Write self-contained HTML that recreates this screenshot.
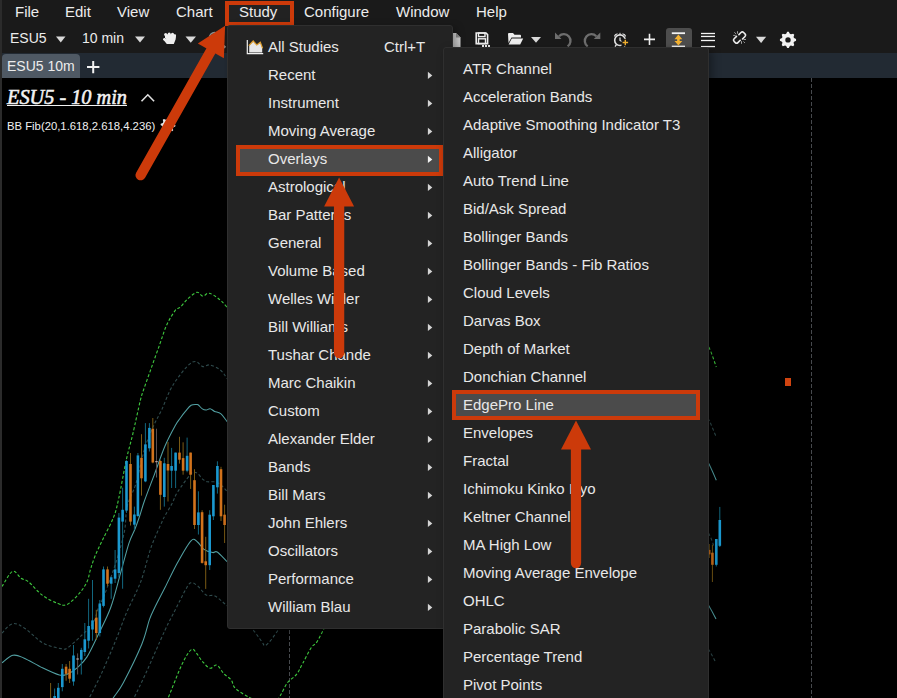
<!DOCTYPE html>
<html><head><meta charset="utf-8">
<style>
*{margin:0;padding:0;box-sizing:border-box}
html,body{width:897px;height:698px;overflow:hidden;background:#000;font-family:"Liberation Sans",sans-serif;color:#e6e6e6}
.abs{position:absolute}
.mb{position:absolute;top:3px;font-size:15px;line-height:18px;color:#ececec;white-space:nowrap}
.tb{position:absolute;font-size:14px;line-height:16px;color:#ececec;white-space:nowrap}
.menu{position:absolute;background:#232323;border:1px solid #2f2f2f;border-radius:3px;box-shadow:3px 3px 9px rgba(0,0,0,0.35)}
.mi{position:absolute;font-size:15px;line-height:18px;color:#e8e8e8;white-space:nowrap}
.tri{position:absolute;width:0;height:0;border-top:3.7px solid transparent;border-bottom:3.7px solid transparent;border-left:4.6px solid #d0d0d0}
</style></head><body>

<div class="abs" style="left:0;top:0;width:897px;height:53px;background:#1a1a1a"></div>
<div class="abs" style="left:0;top:53px;width:897px;height:25px;background:#222a33"></div>
<div class="abs" style="left:2px;top:54px;width:78px;height:24px;background:#4f5964;border-radius:4px 4px 0 0"></div>
<svg class="abs" style="left:0;top:0" width="897" height="698"><line x1="289.5" y1="78" x2="289.5" y2="698" stroke="#46494d" stroke-width="1" stroke-dasharray="4 2"/>
<line x1="811.5" y1="78" x2="811.5" y2="698" stroke="#46494d" stroke-width="1" stroke-dasharray="4 2"/>
<rect x="785" y="378" width="6" height="8" fill="#d04410"/>
<path d="M2.00,633.00 C3.77,631.45 8.77,624.45 12.60,623.70 C16.43,622.95 19.93,625.28 25.00,628.50 C30.07,631.72 37.00,639.65 43.00,643.00 C49.00,646.35 56.83,647.85 61.00,648.60 C65.17,649.35 64.50,649.77 68.00,647.50 C71.50,645.23 77.85,639.03 82.00,635.00 C86.15,630.97 90.12,627.97 92.90,623.30 C95.68,618.63 96.72,611.88 98.70,607.00 C100.68,602.12 101.80,601.83 104.80,594.00 C107.80,586.17 113.42,570.50 116.70,560.00 C119.98,549.50 122.75,540.00 124.50,531.00 C126.25,522.00 125.32,513.83 127.20,506.00 C129.08,498.17 132.93,493.42 135.80,484.00 C138.67,474.58 141.53,459.00 144.40,449.50 C147.27,440.00 150.13,433.58 153.00,427.00 C155.87,420.42 158.73,416.17 161.60,410.00 C164.47,403.83 167.33,395.57 170.20,390.00 C173.07,384.43 175.67,380.83 178.80,376.60 C181.93,372.37 186.13,367.12 189.00,364.60 C191.87,362.08 193.70,361.17 196.00,361.50 C198.30,361.83 200.52,366.03 202.80,366.60 C205.08,367.17 206.83,364.38 209.70,364.90 C212.57,365.42 217.13,367.47 220.00,369.70 C222.87,371.93 224.40,374.58 226.90,378.30 C229.40,382.02 233.65,389.72 235.00,392.00" stroke="#2f4b4d" stroke-width="1.1" fill="none" stroke-dasharray="3 2.2"/>
<path d="M700.00,405.00 C701.48,407.50 706.18,414.63 708.90,420.00 C711.62,425.37 715.07,434.33 716.30,437.20" stroke="#2f4b4d" stroke-width="1.1" fill="none" stroke-dasharray="3 2.2"/>
<path d="M85.00,706.00 C87.50,701.12 94.92,687.53 100.00,676.70 C105.08,665.87 111.12,651.58 115.50,641.00 C119.88,630.42 122.68,621.70 126.30,613.20 C129.92,604.70 134.47,596.20 137.20,590.00 C139.93,583.80 140.35,583.22 142.70,576.00 C145.05,568.78 148.15,555.58 151.30,546.70 C154.45,537.82 159.32,527.87 161.60,522.70 C163.88,517.53 163.28,518.85 165.00,515.70 C166.72,512.55 169.80,507.75 171.90,503.80 C174.00,499.85 174.55,496.85 177.60,492.00 C180.65,487.15 187.43,477.98 190.20,474.70 C192.97,471.42 192.88,472.43 194.20,472.30 C195.52,472.17 196.65,472.72 198.10,473.90 C199.55,475.08 201.32,478.08 202.90,479.40 C204.48,480.72 205.77,481.40 207.60,481.80 C209.43,482.20 211.80,481.40 213.90,481.80 C216.00,482.20 218.03,482.62 220.20,484.20 C222.37,485.78 224.43,488.67 226.90,491.30 C229.37,493.93 233.65,498.55 235.00,500.00" stroke="#2f4b4d" stroke-width="1.1" fill="none" stroke-dasharray="3 2.2"/>
<path d="M700.00,520.00 C701.53,522.40 706.90,530.10 709.20,534.40 C711.50,538.70 713.03,543.90 713.80,545.80" stroke="#2f4b4d" stroke-width="1.1" fill="none" stroke-dasharray="3 2.2"/>
<path d="M130.00,706.00 C130.67,704.67 131.27,703.67 134.00,698.00 C136.73,692.33 141.23,683.30 146.40,672.00 C151.57,660.70 160.08,640.77 165.00,630.20 C169.92,619.63 172.47,615.35 175.90,608.60 C179.33,601.85 183.12,594.00 185.60,589.70 C188.08,585.40 188.78,583.42 190.80,582.80 C192.82,582.18 195.13,583.97 197.70,586.00 C200.27,588.03 203.32,593.33 206.20,595.00 C209.08,596.67 211.55,594.25 215.00,596.00 C218.45,597.75 222.73,602.17 226.90,605.50 C231.07,608.83 235.77,612.12 240.00,616.00 C244.23,619.88 248.62,624.45 252.30,628.80 C255.98,633.15 260.00,639.30 262.10,642.10 C264.20,644.90 263.50,645.83 264.90,645.60 C266.30,645.37 268.15,643.50 270.50,640.70 C272.85,637.90 276.58,632.25 279.00,628.80 C281.42,625.35 284.00,621.47 285.00,620.00" stroke="#2f4b4d" stroke-width="1.1" fill="none" stroke-dasharray="3 2.2"/>
<path d="M700.00,636.00 C701.50,638.33 706.33,645.55 709.00,650.00 C711.67,654.45 714.83,660.58 716.00,662.70" stroke="#2f4b4d" stroke-width="1.1" fill="none" stroke-dasharray="3 2.2"/>
<path d="M2.00,662.80 C3.82,661.55 9.28,656.12 12.90,655.30 C16.52,654.48 18.77,655.82 23.70,657.90 C28.63,659.98 36.57,664.95 42.50,667.80 C48.43,670.65 55.18,673.92 59.30,675.00 C63.42,676.08 64.23,675.50 67.20,674.30 C70.17,673.10 73.80,670.70 77.10,667.80 C80.40,664.90 83.37,662.67 87.00,656.90 C90.63,651.13 94.95,641.43 98.90,633.20 C102.85,624.97 107.13,617.33 110.70,607.50 C114.27,597.67 117.27,584.90 120.30,574.20 C123.33,563.50 126.45,550.83 128.90,543.30 C131.35,535.77 133.15,533.72 135.00,529.00 C136.85,524.28 138.43,519.67 140.00,515.00 C141.57,510.33 141.95,507.90 144.40,501.00 C146.85,494.10 151.27,482.77 154.70,473.60 C158.13,464.43 161.57,454.02 165.00,446.00 C168.43,437.98 172.80,430.08 175.30,425.50 C177.80,420.92 178.28,420.88 180.00,418.50 C181.72,416.12 183.75,413.40 185.60,411.20 C187.45,409.00 189.25,406.42 191.10,405.30 C192.95,404.18 195.48,404.55 196.70,404.50 C197.92,404.45 197.47,404.27 198.40,405.00 C199.33,405.73 201.00,408.07 202.30,408.90 C203.60,409.73 204.90,410.03 206.20,410.00 C207.50,409.97 208.70,408.47 210.10,408.70 C211.50,408.93 212.83,410.57 214.60,411.40 C216.37,412.23 218.67,412.07 220.70,413.70 C222.73,415.33 224.42,418.15 226.80,421.20 C229.18,424.25 233.63,430.20 235.00,432.00" stroke="#52a0a3" stroke-width="1.05" fill="none"/>
<path d="M700.00,447.00 C701.48,449.80 706.18,458.27 708.90,463.80 C711.62,469.33 715.07,477.47 716.30,480.20" stroke="#52a0a3" stroke-width="1.05" fill="none"/>
<path d="M109.00,706.00 C109.70,704.67 110.83,701.85 113.20,698.00 C115.57,694.15 118.43,691.87 123.20,682.90 C127.97,673.93 137.42,654.78 141.80,644.20 C146.18,633.62 147.30,625.60 149.50,619.40 C151.70,613.20 152.42,612.32 155.00,607.00 C157.58,601.68 161.23,594.92 165.00,587.50 C168.77,580.08 173.27,570.28 177.60,562.50 C181.93,554.72 187.68,544.22 191.00,540.80 C194.32,537.38 195.33,540.57 197.50,542.00 C199.67,543.43 201.47,547.63 204.00,549.40 C206.53,551.17 210.50,552.17 212.70,552.60 C214.90,553.03 214.83,550.52 217.20,552.00 C219.57,553.48 223.93,558.50 226.90,561.50 C229.87,564.50 233.65,568.58 235.00,570.00" stroke="#52a0a3" stroke-width="1.05" fill="none"/>
<path d="M700.00,592.00 C701.50,594.33 706.33,601.50 709.00,606.00 C711.67,610.50 714.83,616.83 716.00,619.00" stroke="#52a0a3" stroke-width="1.05" fill="none"/>
<path d="M2.00,586.50 C3.77,583.97 9.43,572.67 12.60,571.30 C15.77,569.93 18.35,576.55 21.00,578.30 C23.65,580.05 24.88,578.93 28.50,581.80 C32.12,584.67 37.78,591.88 42.70,595.50 C47.62,599.12 53.95,602.00 58.00,603.50 C62.05,605.00 63.47,606.17 67.00,604.50 C70.53,602.83 75.87,597.28 79.20,593.50 C82.53,589.72 85.12,585.82 87.00,581.80 C88.88,577.78 89.10,573.83 90.50,569.40 C91.90,564.97 93.32,560.27 95.40,555.20 C97.48,550.13 99.98,545.30 103.00,539.00 C106.02,532.70 110.90,524.07 113.50,517.40 C116.10,510.73 116.45,508.67 118.60,499.00 C120.75,489.33 124.03,470.23 126.40,459.40 C128.77,448.57 130.50,443.73 132.80,434.00 C135.10,424.27 138.42,408.33 140.20,401.00 C141.98,393.67 141.65,395.50 143.50,390.00 C145.35,384.50 148.57,375.68 151.30,368.00 C154.03,360.32 157.33,351.07 159.90,343.90 C162.47,336.73 164.13,330.58 166.70,325.00 C169.27,319.42 173.00,313.40 175.30,310.40 C177.60,307.40 178.48,308.87 180.50,307.00 C182.52,305.13 184.68,301.65 187.40,299.20 C190.12,296.75 194.23,292.82 196.80,292.30 C199.37,291.78 200.80,295.95 202.80,296.10 C204.80,296.25 206.37,292.92 208.80,293.20 C211.23,293.48 214.38,295.50 217.40,297.80 C220.42,300.10 223.13,302.47 226.90,307.00 C230.67,311.53 237.82,322.00 240.00,325.00" stroke="#3ec83e" stroke-width="1.1" fill="none" stroke-dasharray="3 2"/>
<path d="M700.00,335.00 C701.48,337.05 706.18,341.97 708.90,347.30 C711.62,352.63 715.07,363.72 716.30,367.00" stroke="#3ec83e" stroke-width="1.1" fill="none" stroke-dasharray="3 2"/>
<path d="M164.00,706.00 C164.68,704.67 165.10,704.95 168.10,698.00 C171.10,691.05 178.13,672.37 182.00,664.30 C185.87,656.23 188.85,651.40 191.30,649.60 C193.75,647.80 194.88,651.57 196.70,653.50 C198.52,655.43 200.00,658.75 202.20,661.20 C204.40,663.65 207.45,667.55 209.90,668.20 C212.35,668.85 214.58,664.20 216.90,665.10 C219.22,666.00 221.42,671.12 223.80,673.60 C226.18,676.08 229.27,677.53 231.20,680.00 C233.13,682.47 232.35,685.48 235.40,688.40 C238.45,691.32 245.07,695.23 249.50,697.50 C253.93,699.77 257.75,701.25 262.00,702.00 C266.25,702.75 271.93,703.10 275.00,702.00 C278.07,700.90 278.33,698.60 280.40,695.40 C282.47,692.20 284.72,686.30 287.40,682.80 C290.08,679.30 293.93,677.67 296.50,674.40 C299.07,671.13 300.35,667.65 302.80,663.20 C305.25,658.75 308.87,651.22 311.20,647.70 C313.53,644.18 314.68,645.25 316.80,642.10 C318.92,638.95 321.70,632.82 323.90,628.80 C326.10,624.78 328.98,619.80 330.00,618.00" stroke="#3ec83e" stroke-width="1.1" fill="none" stroke-dasharray="3 2"/>
<rect x="50.1" y="683" width="1" height="15.0" fill="#7a5a14"/>
<rect x="49.3" y="699" width="2.6" height="3.0" fill="#d2731c"/>
<rect x="54.1" y="688.5" width="1" height="9.5" fill="#12677f"/>
<rect x="53.3" y="696" width="2.6" height="4.0" fill="#1b98cf"/>
<rect x="57.8" y="683" width="1" height="15.0" fill="#12677f"/>
<rect x="57.0" y="687.8" width="2.6" height="12.2" fill="#1b98cf"/>
<rect x="61.8" y="664" width="1" height="27.3" fill="#12677f"/>
<rect x="61.0" y="668.8" width="2.6" height="18.3" fill="#1b98cf"/>
<rect x="65.6" y="664" width="1" height="16.8" fill="#7a5a14"/>
<rect x="64.8" y="666.7" width="2.6" height="7.1" fill="#d2731c"/>
<rect x="69.1" y="661" width="1" height="22.0" fill="#7a5a14"/>
<rect x="68.3" y="668.8" width="2.6" height="9.9" fill="#d2731c"/>
<rect x="73.0" y="645" width="1" height="40.7" fill="#12677f"/>
<rect x="72.2" y="655.5" width="2.6" height="26.0" fill="#1b98cf"/>
<rect x="77.1" y="653.4" width="1" height="21.1" fill="#5a5050"/>
<rect x="76.3" y="658.5" width="2.6" height="1.0" fill="#c8b8b8"/>
<rect x="80.8" y="647.8" width="1" height="26.7" fill="#12677f"/>
<rect x="80.0" y="649.9" width="2.6" height="9.8" fill="#1b98cf"/>
<rect x="84.3" y="623" width="1" height="33.0" fill="#12677f"/>
<rect x="83.5" y="639.3" width="2.6" height="12.7" fill="#1b98cf"/>
<rect x="88.1" y="598.8" width="1" height="49.7" fill="#12677f"/>
<rect x="87.3" y="626" width="2.6" height="14.7" fill="#1b98cf"/>
<rect x="92.0" y="580" width="1" height="60.7" fill="#12677f"/>
<rect x="91.2" y="620.4" width="2.6" height="9.1" fill="#1b98cf"/>
<rect x="95.8" y="609.8" width="1" height="30.2" fill="#7a5a14"/>
<rect x="95.0" y="617.6" width="2.6" height="15.4" fill="#d2731c"/>
<rect x="99.3" y="600" width="1" height="36.5" fill="#12677f"/>
<rect x="98.5" y="603.5" width="2.6" height="29.5" fill="#1b98cf"/>
<rect x="103.0" y="566.5" width="1" height="40.9" fill="#12677f"/>
<rect x="102.2" y="569.4" width="2.6" height="36.5" fill="#1b98cf"/>
<rect x="107.0" y="566.5" width="1" height="19.4" fill="#7a5a14"/>
<rect x="106.2" y="569.4" width="2.6" height="14.3" fill="#d2731c"/>
<rect x="110.7" y="576.6" width="1" height="22.2" fill="#12677f"/>
<rect x="109.9" y="577.3" width="2.6" height="6.4" fill="#1b98cf"/>
<rect x="114.6" y="550" width="1" height="33.0" fill="#12677f"/>
<rect x="113.8" y="569.4" width="2.6" height="9.3" fill="#1b98cf"/>
<rect x="118.4" y="513" width="1" height="64.3" fill="#12677f"/>
<rect x="117.6" y="517.6" width="2.6" height="55.4" fill="#1b98cf"/>
<rect x="122.1" y="487.7" width="1" height="101.0" fill="#12677f"/>
<rect x="121.3" y="509.8" width="2.6" height="11.8" fill="#1b98cf"/>
<rect x="126.0" y="460.2" width="1" height="52.7" fill="#12677f"/>
<rect x="125.2" y="461" width="2.6" height="49.6" fill="#1b98cf"/>
<rect x="130.0" y="453" width="1" height="72.5" fill="#7a5a14"/>
<rect x="129.2" y="464" width="2.6" height="57.6" fill="#d2731c"/>
<rect x="133.9" y="506.6" width="1" height="23.4" fill="#12677f"/>
<rect x="133.1" y="514.5" width="2.6" height="10.2" fill="#1b98cf"/>
<rect x="137.4" y="453" width="1" height="63.9" fill="#12677f"/>
<rect x="136.6" y="455.4" width="2.6" height="60.6" fill="#1b98cf"/>
<rect x="141.0" y="434.2" width="1" height="61.4" fill="#7a5a14"/>
<rect x="140.2" y="457.8" width="2.6" height="20.5" fill="#d2731c"/>
<rect x="144.9" y="423.1" width="1" height="59.1" fill="#12677f"/>
<rect x="144.1" y="444.4" width="2.6" height="37.0" fill="#1b98cf"/>
<rect x="148.9" y="423.1" width="1" height="28.4" fill="#12677f"/>
<rect x="148.1" y="427.9" width="2.6" height="20.4" fill="#1b98cf"/>
<rect x="152.3" y="418" width="1" height="45.3" fill="#7a5a14"/>
<rect x="151.5" y="428.7" width="2.6" height="33.8" fill="#d2731c"/>
<rect x="156.0" y="428.7" width="1" height="48.8" fill="#5a5050"/>
<rect x="155.2" y="461.2" width="2.6" height="1.0" fill="#c8b8b8"/>
<rect x="159.9" y="460.2" width="1" height="49.6" fill="#7a5a14"/>
<rect x="159.1" y="461" width="2.6" height="33.8" fill="#d2731c"/>
<rect x="163.8" y="457.8" width="1" height="48.8" fill="#12677f"/>
<rect x="163.0" y="463.3" width="2.6" height="33.7" fill="#1b98cf"/>
<rect x="167.5" y="442" width="1" height="59.5" fill="#7a5a14"/>
<rect x="166.7" y="464" width="2.6" height="6.5" fill="#d2731c"/>
<rect x="171.1" y="447.9" width="1" height="40.1" fill="#12677f"/>
<rect x="170.3" y="466" width="2.6" height="4.7" fill="#1b98cf"/>
<rect x="175.1" y="452.6" width="1" height="35.4" fill="#12677f"/>
<rect x="174.3" y="452.6" width="2.6" height="18.1" fill="#1b98cf"/>
<rect x="179.0" y="436.8" width="1" height="26.8" fill="#7a5a14"/>
<rect x="178.2" y="452.6" width="2.6" height="7.1" fill="#d2731c"/>
<rect x="182.6" y="442.3" width="1" height="32.4" fill="#7a5a14"/>
<rect x="181.8" y="458.1" width="2.6" height="12.6" fill="#d2731c"/>
<rect x="186.6" y="437.6" width="1" height="34.7" fill="#12677f"/>
<rect x="185.8" y="455.8" width="2.6" height="14.9" fill="#1b98cf"/>
<rect x="190.1" y="452.6" width="1" height="36.3" fill="#7a5a14"/>
<rect x="189.3" y="452.6" width="2.6" height="22.1" fill="#d2731c"/>
<rect x="194.0" y="469.2" width="1" height="59.8" fill="#7a5a14"/>
<rect x="193.2" y="480.2" width="2.6" height="44.8" fill="#d2731c"/>
<rect x="197.9" y="491.3" width="1" height="43.2" fill="#12677f"/>
<rect x="197.1" y="512.4" width="2.6" height="12.6" fill="#1b98cf"/>
<rect x="201.6" y="510.2" width="1" height="53.4" fill="#7a5a14"/>
<rect x="200.8" y="512.2" width="2.6" height="50.7" fill="#d2731c"/>
<rect x="205.2" y="536.8" width="1" height="52.1" fill="#7a5a14"/>
<rect x="204.4" y="561.3" width="2.6" height="3.9" fill="#d2731c"/>
<rect x="209.2" y="510.2" width="1" height="59.8" fill="#12677f"/>
<rect x="208.4" y="514.7" width="2.6" height="50.5" fill="#1b98cf"/>
<rect x="212.9" y="485" width="1" height="35.0" fill="#12677f"/>
<rect x="212.1" y="485" width="2.6" height="31.3" fill="#1b98cf"/>
<rect x="216.9" y="461.3" width="1" height="32.3" fill="#12677f"/>
<rect x="216.1" y="466" width="2.6" height="21.3" fill="#1b98cf"/>
<rect x="220.5" y="466.8" width="1" height="54.2" fill="#7a5a14"/>
<rect x="219.7" y="469.2" width="2.6" height="47.1" fill="#d2731c"/>
<rect x="224.1" y="504.7" width="1" height="38.3" fill="#7a5a14"/>
<rect x="223.3" y="514.7" width="2.6" height="10.3" fill="#d2731c"/>
<rect x="708.7" y="544" width="1" height="14.0" fill="#7a5a14"/>
<rect x="707.9" y="549.9" width="2.6" height="4.5" fill="#d2731c"/>
<rect x="711.9" y="544.7" width="1" height="37.3" fill="#7a5a14"/>
<rect x="711.1" y="552.7" width="2.6" height="12.1" fill="#d2731c"/>
<rect x="715.8" y="539" width="1" height="27.5" fill="#12677f"/>
<rect x="715.0" y="539" width="2.6" height="25.8" fill="#1b98cf"/>
<rect x="719.3" y="506.9" width="1" height="40.1" fill="#12677f"/>
<rect x="718.5" y="520" width="2.6" height="25.8" fill="#1b98cf"/></svg>
<div class="abs" style="left:0;top:0;width:2px;height:698px;background:#2b2b2b"></div>
<svg class="abs" style="left:0;top:0" width="897" height="698"><polygon points="56,36.5 65.5,36.5 60.75,42.5" fill="#d9d9d9"/>
<polygon points="135,36.5 145,36.5 140.0,42.5" fill="#d9d9d9"/>
<polygon points="185.5,36.5 196,36.5 190.75,42.7" fill="#d9d9d9"/>
<polygon points="531,37 541,37 536.0,42.8" fill="#d9d9d9"/>
<polygon points="756,36.8 766.2,36.8 761.1,42.9" fill="#d9d9d9"/>
<g fill="#eeeeee"><path d="M165.3,36.5 L175.9,35.8 L175.6,39.5 L173.8,43.9 L166.8,43.9 L163.4,39.8 L164.5,38.2 L166.2,39.2 Z"/><circle cx="165.7" cy="34.5" r="1.6"/><circle cx="169.2" cy="34.2" r="1.6"/><circle cx="172.5" cy="34.4" r="1.6"/><circle cx="175" cy="35.7" r="1.1"/><rect x="165" y="34.4" width="10.5" height="4"/><circle cx="164.4" cy="39.2" r="1.3"/></g>
<circle cx="214.6" cy="37.7" r="5" fill="none" stroke="#8a9090" stroke-width="1.8"/><path d="M219.5,42.5 L225.3,47.6" stroke="#8a9090" stroke-width="2.4"/>
<path d="M446,33 L456,33 L460.5,37.5 L460.5,47 L446,47 Z" fill="#cfcfcf"/><path d="M456,33 L456,37.5 L460.5,37.5 Z" fill="#8a8a8a"/>
<path d="M476.2,33 L486,33 L487.6,34.6 L487.6,43.6 L476.2,43.6 Z" fill="none" stroke="#eeeeee" stroke-width="1.6"/>
<rect x="478.5" y="33" width="6.5" height="3.6" fill="none" stroke="#eeeeee" stroke-width="1.4"/>
<rect x="478.5" y="38.8" width="7" height="4.8" fill="none" stroke="#eeeeee" stroke-width="1.4"/>
<rect x="482" y="45" width="2" height="2" fill="#eee"/><rect x="485" y="45" width="2" height="2" fill="#eee"/><rect x="488" y="45" width="2" height="2" fill="#eee"/>
<path d="M508,34 Q508,33 509,33 L513,33 L514.5,34.8 L520,34.8 Q521,34.8 521,35.8 L521,37.5 L511.5,37.5 L508.5,43 Z" fill="#eeeeee"/>
<path d="M511.8,38.6 L523.2,38.6 L520.2,44.4 L508.6,44.4 Z" fill="#eeeeee"/>
<path d="M559,36.2 A6.7,6.7 0 1 1 567.6,46.4" fill="none" stroke="#6e6e6e" stroke-width="2.3"/><polygon points="555,32.6 555,39.1 561.5,39.1" fill="#6e6e6e"/>
<g transform="translate(1155.3,0) scale(-1,1)"><path d="M559,36.2 A6.7,6.7 0 1 1 567.6,46.4" fill="none" stroke="#6e6e6e" stroke-width="2.3"/><polygon points="555,32.6 555,39.1 561.5,39.1" fill="#6e6e6e"/></g>
<circle cx="620" cy="40.2" r="5.3" fill="none" stroke="#e6e6e6" stroke-width="1.6"/>
<path d="M614,37 A3.2,3.2 0 0 1 618,33.6 Z" fill="#e6e6e6"/><path d="M626,37 A3.2,3.2 0 0 0 622,33.6 Z" fill="#e6e6e6"/>
<rect x="619.5" y="32.8" width="1" height="1.8" fill="#e6e6e6"/>
<path d="M620,37.5 L620,40.5 L622,41.5" fill="none" stroke="#e6e6e6" stroke-width="1.2"/>
<path d="M616.5,44.5 L615,46.6 M623.5,44.5 L625,46.6" stroke="#e6e6e6" stroke-width="1.3"/>
<rect x="621.5" y="38.8" width="7.5" height="7.5" fill="#1a1a1a"/><path d="M625.3,39.8 L625.3,45.3 M622.6,42.5 L628.1,42.5" stroke="#f0b030" stroke-width="1.4"/>
<path d="M649.5,33.8 L649.5,45 M644,39.4 L655,39.4" stroke="#eeeeee" stroke-width="1.6"/>
<rect x="666" y="28" width="26" height="22" rx="3" fill="#4d4d4d"/>
<rect x="671.8" y="32.3" width="13.2" height="1.8" fill="#f2f2f2"/><rect x="671.8" y="45.6" width="13.2" height="1.8" fill="#f2f2f2"/>
<path d="M678.4,34.6 L682.3,39.2 L679.7,39.2 L679.7,40.9 L682.3,40.9 L678.4,45.5 L674.5,40.9 L677.1,40.9 L677.1,39.2 L674.5,39.2 Z" fill="#f5b331"/>
<rect x="701" y="32.85" width="14" height="1.3" fill="#f4f4f4"/>
<rect x="701" y="35.800000000000004" width="14" height="1.3" fill="#f4f4f4"/>
<rect x="701" y="39.85" width="14" height="1.3" fill="#f4f4f4"/>
<rect x="701" y="45.9" width="14" height="1.3" fill="#f4f4f4"/>
<path d="M738.9,34.6 L741,32.5 Q742.3,31.2 743.6,32.5 L745,33.9 Q746.3,35.2 745,36.5 L742.5,39" fill="none" stroke="#ececec" stroke-width="1.6" stroke-linecap="round"/>
<path d="M740.2,40.3 L737.9,42.6 Q736.6,43.9 735.3,42.6 L734.1,41.4 Q732.8,40.1 734.1,38.8 L736.5,36.4" fill="none" stroke="#ececec" stroke-width="1.6" stroke-linecap="round"/>
<path d="M734.3,32.3 L736.2,34 M737.5,31.2 L737.5,33.7 M733.2,35.4 L735.7,35.4 M743.5,39.5 L746,39.5 M741.5,41.2 L741.5,43.8 M743.5,41.5 L744.9,42.9" stroke="#a0a0a0" stroke-width="1"/>
<path d="M796.06,39.11 L796.06,40.69 L794.03,41.73 L793.56,42.87 L794.26,45.04 L793.14,46.16 L790.97,45.46 L789.83,45.93 L788.79,47.96 L787.21,47.96 L786.17,45.93 L785.03,45.46 L782.86,46.16 L781.74,45.04 L782.44,42.87 L781.97,41.73 L779.94,40.69 L779.94,39.11 L781.97,38.07 L782.44,36.93 L781.74,34.76 L782.86,33.64 L785.03,34.34 L786.17,33.87 L787.21,31.84 L788.79,31.84 L789.83,33.87 L790.97,34.34 L793.14,33.64 L794.26,34.76 L793.56,36.93 L794.03,38.07 Z M790.7,39.9 A2.7,2.7 0 1 0 785.3,39.9 A2.7,2.7 0 1 0 790.7,39.9 Z" fill="#f2f2f2" fill-rule="evenodd"/>
<path d="M93.2,61 L93.2,73.2 M87,67.1 L99.4,67.1" stroke="#f2f2f2" stroke-width="2"/>
<path d="M141.5,101.3 L147.8,94.8 L154.1,101.3" fill="none" stroke="#e0e0e0" stroke-width="1.6"/>
<path d="M175.40,125.10 L175.26,126.54 L173.27,127.28 L172.74,128.27 L173.23,130.33 L172.11,131.25 L170.18,130.37 L169.11,130.69 L168.00,132.50 L166.56,132.36 L165.82,130.37 L164.83,129.84 L162.77,130.33 L161.85,129.21 L162.73,127.28 L162.41,126.21 L160.60,125.10 L160.74,123.66 L162.73,122.92 L163.26,121.93 L162.77,119.87 L163.89,118.95 L165.82,119.83 L166.89,119.51 L168.00,117.70 L169.44,117.84 L170.18,119.83 L171.17,120.36 L173.23,119.87 L174.15,120.99 L173.27,122.92 L173.59,123.99 Z M170.6,125.1 A2.6,2.6 0 1 0 165.4,125.1 A2.6,2.6 0 1 0 170.6,125.1 Z" fill="#e6e6e6" fill-rule="evenodd"/></svg>
<div class="abs" style="left:7px;top:84.5px;font:italic 20.3px 'Liberation Serif',serif;-webkit-text-stroke:0.55px #f2f2f2;line-height:24px;color:#f2f2f2;text-decoration:underline;text-underline-offset:1px;text-decoration-thickness:1px;white-space:nowrap">ESU5 - 10 min</div>
<div class="abs" style="left:7px;top:119px;font-size:11.3px;line-height:14px;color:#f0f0f0;white-space:nowrap">BB Fib(20,1.618,2.618,4.236)</div>
<div class="mb" style="left:15px">File</div>
<div class="mb" style="left:65px">Edit</div>
<div class="mb" style="left:117px">View</div>
<div class="mb" style="left:176px">Chart</div>
<div class="abs" style="left:225px;top:1px;width:69px;height:25px;border:4px solid #cc3a0a;background:#222"></div>
<div class="mb" style="left:239px">Study</div>
<div class="mb" style="left:304px">Configure</div>
<div class="mb" style="left:396px">Window</div>
<div class="mb" style="left:476px">Help</div>
<div class="tb" style="left:10px;top:30.3px">ESU5</div>
<div class="tb" style="left:82px;top:30.3px">10 min</div>
<div class="tb" style="left:7px;top:58px">ESU5 10m</div>
<div class="menu" style="left:227px;top:25px;width:226px;height:604px"></div>
<div class="mi" style="left:268px;top:38px">All Studies</div>
<div class="mi" style="left:384px;top:38px">Ctrl+T</div>
<svg class="abs" style="left:0;top:0" width="897" height="698"><path d="M247.3,40 L247.3,53.6 L263.2,53.6" fill="none" stroke="#f0f0f0" stroke-width="1.2"/>
<path d="M249.2,52.6 L249.2,45.5 L253.2,41.3 L256.8,45.3 L260.3,42.5 L262.2,47.5 L262.2,52.6 Z" fill="#e8e8e8"/>
<path d="M248.8,45.6 L253.2,41 L256.8,45 L260.3,42.2 L262.6,48.3" fill="none" stroke="#e0a030" stroke-width="1.2"/></svg>
<div class="mi" style="left:268px;top:66px">Recent</div>
<div class="mi" style="left:268px;top:94px">Instrument</div>
<div class="mi" style="left:268px;top:122px">Moving Average</div>
<div class="abs" style="left:236px;top:145px;width:207px;height:31px;border:4px solid #cc3a0a;background:#4b4b4b"></div>
<div class="mi" style="left:268px;top:150px">Overlays</div>
<div class="mi" style="left:268px;top:178px">Astrological</div>
<div class="mi" style="left:268px;top:206px">Bar Patterns</div>
<div class="mi" style="left:268px;top:234px">General</div>
<div class="mi" style="left:268px;top:262px">Volume Based</div>
<div class="mi" style="left:268px;top:290px">Welles Wilder</div>
<div class="mi" style="left:268px;top:318px">Bill Williams</div>
<div class="mi" style="left:268px;top:346px">Tushar Chande</div>
<div class="mi" style="left:268px;top:374px">Marc Chaikin</div>
<div class="mi" style="left:268px;top:402px">Custom</div>
<div class="mi" style="left:268px;top:430px">Alexander Elder</div>
<div class="mi" style="left:268px;top:458px">Bands</div>
<div class="mi" style="left:268px;top:486px">Bill Mars</div>
<div class="mi" style="left:268px;top:514px">John Ehlers</div>
<div class="mi" style="left:268px;top:542px">Oscillators</div>
<div class="mi" style="left:268px;top:570px">Performance</div>
<div class="mi" style="left:268px;top:598px">William Blau</div>
<svg class="abs" style="left:0;top:0" width="897" height="698"><polygon points="427.9,71.7 432.3,75.4 427.9,79.1" fill="#d4d4d4"/><polygon points="427.9,99.7 432.3,103.4 427.9,107.1" fill="#d4d4d4"/><polygon points="427.9,127.7 432.3,131.4 427.9,135.1" fill="#d4d4d4"/><polygon points="427.9,155.7 432.3,159.4 427.9,163.1" fill="#f2f2f2"/><polygon points="427.9,183.7 432.3,187.4 427.9,191.1" fill="#d4d4d4"/><polygon points="427.9,211.7 432.3,215.4 427.9,219.1" fill="#d4d4d4"/><polygon points="427.9,239.7 432.3,243.4 427.9,247.1" fill="#d4d4d4"/><polygon points="427.9,267.7 432.3,271.4 427.9,275.1" fill="#d4d4d4"/><polygon points="427.9,295.7 432.3,299.4 427.9,303.1" fill="#d4d4d4"/><polygon points="427.9,323.7 432.3,327.4 427.9,331.1" fill="#d4d4d4"/><polygon points="427.9,351.7 432.3,355.4 427.9,359.1" fill="#d4d4d4"/><polygon points="427.9,379.7 432.3,383.4 427.9,387.1" fill="#d4d4d4"/><polygon points="427.9,407.7 432.3,411.4 427.9,415.1" fill="#d4d4d4"/><polygon points="427.9,435.7 432.3,439.4 427.9,443.1" fill="#d4d4d4"/><polygon points="427.9,463.7 432.3,467.4 427.9,471.1" fill="#d4d4d4"/><polygon points="427.9,491.7 432.3,495.4 427.9,499.1" fill="#d4d4d4"/><polygon points="427.9,519.7 432.3,523.4 427.9,527.1" fill="#d4d4d4"/><polygon points="427.9,547.7 432.3,551.4 427.9,555.1" fill="#d4d4d4"/><polygon points="427.9,575.7 432.3,579.4 427.9,583.1" fill="#d4d4d4"/><polygon points="427.9,603.7 432.3,607.4 427.9,611.1" fill="#d4d4d4"/></svg>
<div class="menu" style="left:443px;top:47px;width:266px;height:680px"></div>
<div class="mi" style="left:463px;top:60px">ATR Channel</div>
<div class="mi" style="left:463px;top:88px">Acceleration Bands</div>
<div class="mi" style="left:463px;top:116px">Adaptive Smoothing Indicator T3</div>
<div class="mi" style="left:463px;top:144px">Alligator</div>
<div class="mi" style="left:463px;top:172px">Auto Trend Line</div>
<div class="mi" style="left:463px;top:200px">Bid/Ask Spread</div>
<div class="mi" style="left:463px;top:228px">Bollinger Bands</div>
<div class="mi" style="left:463px;top:256px">Bollinger Bands - Fib Ratios</div>
<div class="mi" style="left:463px;top:284px">Cloud Levels</div>
<div class="mi" style="left:463px;top:312px">Darvas Box</div>
<div class="mi" style="left:463px;top:340px">Depth of Market</div>
<div class="mi" style="left:463px;top:368px">Donchian Channel</div>
<div class="abs" style="left:452px;top:390px;width:248px;height:30px;border:4px solid #cc3a0a;background:#4b4b4b"></div>
<div class="mi" style="left:463px;top:396px">EdgePro Line</div>
<div class="mi" style="left:463px;top:424px">Envelopes</div>
<div class="mi" style="left:463px;top:452px">Fractal</div>
<div class="mi" style="left:463px;top:480px">Ichimoku Kinko Hyo</div>
<div class="mi" style="left:463px;top:508px">Keltner Channel</div>
<div class="mi" style="left:463px;top:536px">MA High Low</div>
<div class="mi" style="left:463px;top:564px">Moving Average Envelope</div>
<div class="mi" style="left:463px;top:592px">OHLC</div>
<div class="mi" style="left:463px;top:620px">Parabolic SAR</div>
<div class="mi" style="left:463px;top:648px">Percentage Trend</div>
<div class="mi" style="left:463px;top:676px">Pivot Points</div>
<svg class="abs" style="left:0;top:0" width="897" height="698"><line x1="140.6" y1="175.2" x2="211.8" y2="49.2" stroke="#cc3a0a" stroke-width="10.3" stroke-linecap="round"/><polygon points="225.1,25.7 223.9,58.3 197.8,43.6" fill="#cc3a0a"/><line x1="339.1" y1="353" x2="339.1" y2="204.6" stroke="#cc3a0a" stroke-width="10.3" stroke-linecap="round"/><polygon points="339.1,177.6 354.1,206.6 324.1,206.6" fill="#cc3a0a"/><line x1="576" y1="563" x2="576.0" y2="447.6" stroke="#cc3a0a" stroke-width="10.3" stroke-linecap="round"/><polygon points="576,420.6 591.0,449.6 561.0,449.6" fill="#cc3a0a"/></svg>
</body></html>
